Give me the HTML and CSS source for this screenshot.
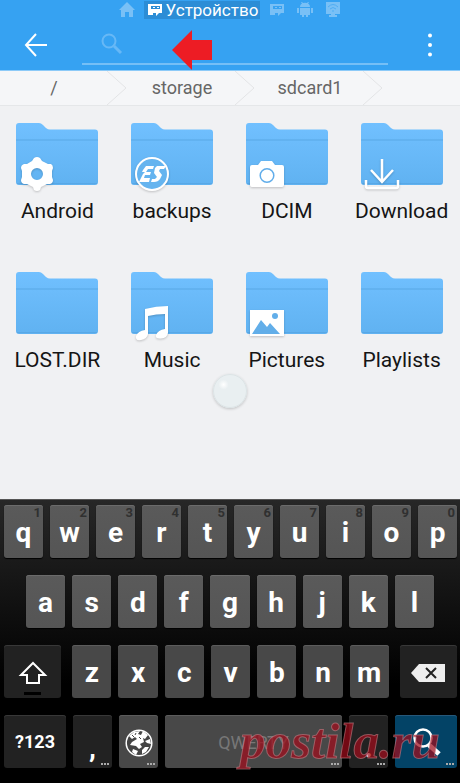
FILE: index.html
```html
<!DOCTYPE html>
<html lang="ru">
<head>
<meta charset="utf-8">
<meta name="viewport" content="width=device-width, initial-scale=1">
<title>Устройство</title>
<link rel="stylesheet" href="styles.css">
</head>
<body>
<svg class="defs" width="0" height="0" aria-hidden="true">
  <defs>
    <linearGradient id="folder-fill" x1="0" y1="0" x2="0" y2="1">
      <stop offset="0" stop-color="#71c0ff"/>
      <stop offset="1" stop-color="#60b2f1"/>
    </linearGradient>
    <symbol id="folder" viewBox="0 0 82 62">
      <path fill="url(#folder-fill)" d="M0 3Q0 0 3 0H23Q25 0 27 2L30 5Q32 6.500 34 6.500H79Q82 6.500 82 9.500V59Q82 62 79 62H3Q0 62 0 59Z"/>
      <path fill="#58a8e6" d="M0 16.500H82V17.500H0ZM1 60H81V61H1Z"/>
    </symbol>
    <symbol id="card" viewBox="0 0 16 14">
      <path fill="currentColor" fill-rule="evenodd" d="M1 1H15V10H12L9 13V10H6V12H1ZM4 3V6H13V3ZM6 4H8V5H6ZM10 4H12V5H10Z"/>
    </symbol>
  </defs>
</svg>

<header class="header">
  <nav class="tabs">
    <a class="tab" href="#home" aria-label="Home"><svg width="16" height="16" viewBox="0 0 16 16"><path fill="currentColor" d="M8 0 16 8H14V15H10V10H6V15H2V8H0Z"/></svg></a>
    <a class="tab tab-active" href="#device"><svg width="16" height="14"><use href="#card"/></svg>Устройство</a>
    <a class="tab" href="#card" aria-label="Card"><svg width="16" height="14"><use href="#card"/></svg></a>
    <a class="tab" href="#apps" aria-label="Apps"><svg width="16" height="16" viewBox="0 0 16 16"><path fill="currentColor" d="M3 5C3 3 4 2 5 1.500L4 0H5L6 1Q8 .5 10 1L11 0H12L11 1.500C12 2 13 3 13 5ZM3 6H13V13H11V15H9V13H7V15H5V13H3ZM0 6H2V11H0ZM14 6H16V11H14Z"/></svg></a>
    <a class="tab" href="#network" aria-label="Network"><svg width="16" height="16" viewBox="0 0 16 16"><path fill="currentColor" d="M1 0H15V12H10V13H12V15H4V13H6V12H1Z"/><path fill="none" stroke="#4fadf4" d="M3 5Q8 0 13 5M5 7Q8 4 11 7M7 9H9"/></svg></a>
  </nav>
  <div class="search-bar">
    <button class="icon-button back" aria-label="Back"><svg width="24" height="24" viewBox="0 0 24 24"><path d="M12 1 2 12 12 23M2 12H23" fill="none" stroke="#fff" stroke-width="2"/></svg></button>
    <label class="search-field">
      <svg width="22" height="22" viewBox="0 0 22 22"><circle cx="8" cy="8" r="6.500" fill="none" stroke="currentColor" stroke-width="2"/><path d="M13 13 20 20" stroke="currentColor" stroke-width="3"/></svg>
      <input type="text" aria-label="Search">
    </label>
    <button class="icon-button more" aria-label="More"><svg width="6" height="24" viewBox="0 0 6 24" fill="#fff"><circle cx="3" cy="2.500" r="2"/><circle cx="3" cy="12" r="2"/><circle cx="3" cy="21.500" r="2"/></svg></button>
  </div>
  <svg class="pointer-arrow" width="40" height="40" viewBox="0 0 40 40" aria-hidden="true"><path fill="#ed1c24" d="M0 20 20 0V10H40V30H20V40Z"/></svg>
</header>

<nav class="breadcrumbs">
  <a href="#root">/</a>
  <svg width="22" height="34" viewBox="0 0 22 34"><path d="M1 0 20 17 1 34"/></svg>
  <a href="#storage">storage</a>
  <svg width="22" height="34" viewBox="0 0 22 34"><path d="M1 0 20 17 1 34"/></svg>
  <a href="#sdcard1">sdcard1</a>
  <svg width="22" height="34" viewBox="0 0 22 34"><path d="M1 0 20 17 1 34"/></svg>
</nav>

<main class="files">
  <a class="file" href="#android">
    <span class="thumb"><svg width="82" height="62"><use href="#folder"/></svg>
      <svg class="badge" width="40" height="36" viewBox="0 0 40 36"><path fill="#fff" fill-rule="evenodd" d="M18 2Q21 0 24 2L26 5 32 8H35Q37 9 37 12L36 15V21L37 24Q37 27 34 28L31 28 25 31 24 34Q21 36 18 34L17 31 11 28H8Q5 27 5 24L6 21V15L5 12Q5 9 8 8H11L16 5ZM21 12A6 6 0 1 0 21 24A6 6 0 1 0 21 12Z"/></svg></span>
    <span>Android</span></a>
  <a class="file" href="#backups">
    <span class="thumb"><svg width="82" height="62"><use href="#folder"/></svg>
      <svg class="badge" width="40" height="36" viewBox="0 0 40 36"><circle cx="21" cy="18" r="16" fill="#65b4ef" stroke="#fff" stroke-width="2"/><path fill="#fff" d="M15 10H23L22 13H17L15 16H20L19 19H14L13 22H19L18 26H8L10 22 12 18 14 16H11L12 14ZM26 10H35L33 13H29L28 15 31 19 29 23Q27 26 23 26H20L21 23H24L26 21 23 17 24 12Z"/></svg></span>
    <span>backups</span></a>
  <a class="file" href="#dcim">
    <span class="thumb"><svg width="82" height="62"><use href="#folder"/></svg>
      <svg class="badge" width="40" height="36" viewBox="0 0 40 36"><path fill="#fff" d="M6 9H12L15 5H26L29 9H36Q38 9 38 11V29Q38 31 36 31H6Q4 31 4 29V11Q4 9 6 9Z"/><circle cx="21" cy="19.500" r="6.800" fill="none" stroke="#61adea" stroke-width="1.500"/></svg></span>
    <span>DCIM</span></a>
  <a class="file" href="#download">
    <span class="thumb"><svg width="82" height="62"><use href="#folder"/></svg>
      <svg class="badge" width="40" height="36" viewBox="0 0 40 36"><path fill="none" stroke="#fff" stroke-width="2.500" d="M21 3V26M10 14 21 26 32 14M5 24V30Q5 32 7 32H35Q37 32 37 30V24"/></svg></span>
    <span>Download</span></a>
  <a class="file" href="#lost">
    <span class="thumb"><svg width="82" height="62"><use href="#folder"/></svg></span>
    <span>LOST.DIR</span></a>
  <a class="file" href="#music">
    <span class="thumb"><svg width="82" height="62"><use href="#folder"/></svg>
      <svg class="badge" width="40" height="36" viewBox="0 0 40 36"><path fill="#fff" d="M14 4Q25 1 37 1V28Q36 33 30 33.500 24 34 25 30 27 25 34 24V9Q25 9 17 11V29Q16 34 10 35 4 36 5 31 7 26 14 25Z"/></svg></span>
    <span>Music</span></a>
  <a class="file" href="#pictures">
    <span class="thumb"><svg width="82" height="62"><use href="#folder"/></svg>
      <svg class="badge" width="40" height="36" viewBox="0 0 40 36"><path fill="#fff" d="M4 5H38V31H4Z"/><path fill="#62aee9" d="M6 29 15 15 21 22 24 18 34 29Z"/><circle cx="29" cy="11" r="3" fill="#62aee9"/></svg></span>
    <span>Pictures</span></a>
  <a class="file" href="#playlists">
    <span class="thumb"><svg width="82" height="62"><use href="#folder"/></svg></span>
    <span>Playlists</span></a>
  <span class="touch-dot"></span>
</main>

<section class="keyboard" aria-label="Keyboard">
  <div class="keys">
    <button class="key">q<small>1</small></button><button class="key">w<small>2</small></button><button class="key">e<small>3</small></button><button class="key">r<small>4</small></button><button class="key">t<small>5</small></button><button class="key">y<small>6</small></button><button class="key">u<small>7</small></button><button class="key">i<small>8</small></button><button class="key">o<small>9</small></button><button class="key">p<small>0</small></button>
  </div>
  <div class="keys keys-inset">
    <button class="key">a</button><button class="key">s</button><button class="key">d</button><button class="key">f</button><button class="key">g</button><button class="key">h</button><button class="key">j</button><button class="key">k</button><button class="key">l</button>
  </div>
  <div class="keys keys-third">
    <button class="key key-dark key-shift" aria-label="Shift"><svg width="30" height="24" viewBox="0 0 30 24"><path fill="none" stroke="#fff" stroke-width="2" d="M15 2 27 14H21V22H9V14H3Z"/></svg></button>
    <div class="keys letters">
      <button class="key">z</button><button class="key">x</button><button class="key">c</button><button class="key">v</button><button class="key">b</button><button class="key">n</button><button class="key">m</button>
    </div>
    <button class="key key-dark" aria-label="Backspace"><svg width="34" height="18" viewBox="0 0 34 18"><path fill="#eee" d="M0 9 8 0H34V18H8Z"/><path stroke="#222" stroke-width="2" d="M15 4 25 14M25 4 15 14"/></svg></button>
  </div>
  <div class="keys keys-bottom">
    <button class="key key-dark key-mode">?123</button>
    <button class="key key-dark key-more key-punct">,</button>
    <button class="key key-more" aria-label="Language"><svg width="28" height="28" viewBox="0 0 28 28"><circle cx="14" cy="14" r="12.800" fill="#444" stroke="#fff" stroke-width="1.500"/><path fill="#fff" d="M4 7 9 3 15 2 13 5 16 6 18 2 23 6 20 10 18 9 19 13 15 15 17 18 14 20 11 17 5 16 7 13 12 10 10 8 7 10ZM20 12 25 10 26 15 22 14ZM8 20 13 22 11 26 7 23ZM17 21 20 18 24 18 21 23 17 25Z"/><path d="M7 6 9 8M11 4 10 6M14 8 16 10" stroke="#444"/></svg></button>
    <button class="key key-more key-space">QWERTY</button>
    <button class="key key-dark key-more key-punct">.</button>
    <button class="key key-more key-search" aria-label="Search"><svg width="30" height="30" viewBox="0 0 30 30"><circle cx="12" cy="11" r="8.500" fill="none" stroke="#fff" stroke-width="2.500"/><path d="M18 18 28 27" stroke="#fff" stroke-width="5"/></svg></button>
  </div>
  <span class="watermark">postila.ru</span>
</section>
</body>
</html>
```

FILE: styles.css
```css
* {
  box-sizing: border-box;
}

body {
  margin: 0;
  min-height: 100vh;
  display: flex;
  flex-direction: column;
  background: #f0f1f3;
  font-family: Roboto, "Liberation Sans", sans-serif;
}

a {
  color: inherit;
  text-decoration: none;
}

button {
  margin: 0;
  padding: 0;
  border: 0;
  background: none;
  font: inherit;
  color: inherit;
}

svg {
  display: block;
  flex: none;
}

.defs {
  position: absolute;
}

.header {
  position: relative;
  background: #36a2f2;
  border-bottom: 1px solid #8ccaf8;
}

.tabs {
  display: flex;
  justify-content: center;
  align-items: center;
  gap: 12px;
  height: 20px;
}

.tab {
  display: flex;
  align-items: center;
  color: #79c0f6;
}

.tab-active {
  gap: 3px;
  height: 18px;
  margin: 0 -3px 0 -3px;
  padding: 0 2px 0 3px;
  background: #2c8dd6;
  color: #fff;
  font-size: 17px;
}

.search-bar {
  display: flex;
  align-items: center;
  height: 50px;
  padding: 0 24px;
}

.search-field {
  flex: 1;
  display: flex;
  align-items: center;
  height: 40px;
  margin: 0 36px 0 34px;
  padding: 0 20px 0 19px;
  border-bottom: 2px solid #75bff6;
  color: #67b8f6;
}

.search-field input {
  flex: 1;
  min-width: 0;
  border: 0;
  outline: 0;
  background: none;
  color: #fff;
  font: inherit;
}

.more {
  padding: 0 3px;
}

.pointer-arrow {
  position: absolute;
  left: 172px;
  top: 30px;
}

.breadcrumbs {
  display: flex;
  align-items: center;
  height: 35px;
  background: #f5f6f8;
  border-bottom: 1px solid #e5e7e9;
  color: #666;
  font-size: 18px;
}

.breadcrumbs a {
  width: 106px;
  padding: 0 0 2px 2px;
  text-align: center;
}

.breadcrumbs path {
  fill: none;
  stroke: #e3e4e6;
}

.files {
  position: relative;
  flex: 1;
  display: grid;
  grid-template-columns: repeat(4, 1fr);
  grid-auto-rows: 149px;
  padding: 17px 1px 78px 0;
}

.file {
  display: flex;
  flex-direction: column;
  align-items: center;
  gap: 14px;
  color: #151515;
  font-size: 21px;
  line-height: 24px;
}

.thumb {
  position: relative;
}

.badge {
  position: absolute;
  left: 0;
  bottom: -7px;
  filter: drop-shadow(0 1px 1px #0003);
}

.touch-dot {
  position: absolute;
  left: 50%;
  top: 268px;
  width: 34px;
  height: 34px;
  margin-left: -17px;
  border: 1px solid #dce4e6;
  border-radius: 50%;
  background: radial-gradient(circle at 30% 30%, #fff 0, #e9eff1 16%);
  box-shadow: 0 1px 3px #0003;
}

.keyboard {
  position: relative;
  display: flex;
  flex-direction: column;
  gap: 17px;
  padding: 5px 3px 15px 4px;
  border-top: 1px solid #555;
  background: linear-gradient(#272727, #000 65%);
}

.keys {
  display: flex;
  gap: 7px;
}

.keys-inset {
  padding: 0 23px 0 22px;
}

.keys-third {
  display: grid;
  grid-template-columns: 57fr 316fr 57fr;
  gap: 11px;
}

.keys-bottom {
  display: grid;
  grid-template-columns: 62fr 39fr 39fr 177fr 39fr 62fr;
}

.key {
  position: relative;
  flex: 1;
  min-width: 0;
  height: 53px;
  display: flex;
  align-items: center;
  justify-content: center;
  padding-top: 2px;
  border-radius: 3px;
  background: linear-gradient(#5a5a5a, #555);
  box-shadow: inset 0 1px #6b6b6b, 0 1px 1px #000;
  color: #fff;
  font-size: 28px;
  font-weight: 700;
}

.key small {
  position: absolute;
  top: 0;
  right: 2px;
  color: #303030;
  font-size: 13px;
}

.letters .key,
.keys-bottom .key {
  background: #484848;
  box-shadow: inset 0 1px #5c5c5c;
}

.keyboard .key-dark {
  background: #222;
  box-shadow: inset 0 1px #383838;
}

.key-shift::after {
  content: "";
  position: absolute;
  bottom: 3px;
  left: 20px;
  right: 20px;
  height: 3px;
  background: #000;
}

.key-more::after {
  content: "";
  position: absolute;
  right: 3px;
  bottom: 3px;
  width: 8px;
  height: 2px;
  background: repeating-linear-gradient(90deg, #aaa 0 2px, transparent 2px 3px);
}

.keys-bottom .key-mode {
  padding: 0;
  font-size: 18px;
}

.key-punct {
  padding-top: 12px;
}

.key-space {
  font-size: 18px;
  font-weight: 400;
  color: #777;
}

.keyboard .key-search {
  padding-bottom: 2px;
  background: #034366;
  box-shadow: inset 0 1px #26587a;
}

.watermark {
  position: absolute;
  right: 20px;
  bottom: 12px;
  color: #a00c1cb8;
  font-family: "Liberation Serif", serif;
  font-size: 51px;
  font-style: italic;
  font-weight: 700;
  line-height: 60px;
  -webkit-text-stroke: 1px #c9848c90;
  pointer-events: none;
}
```
